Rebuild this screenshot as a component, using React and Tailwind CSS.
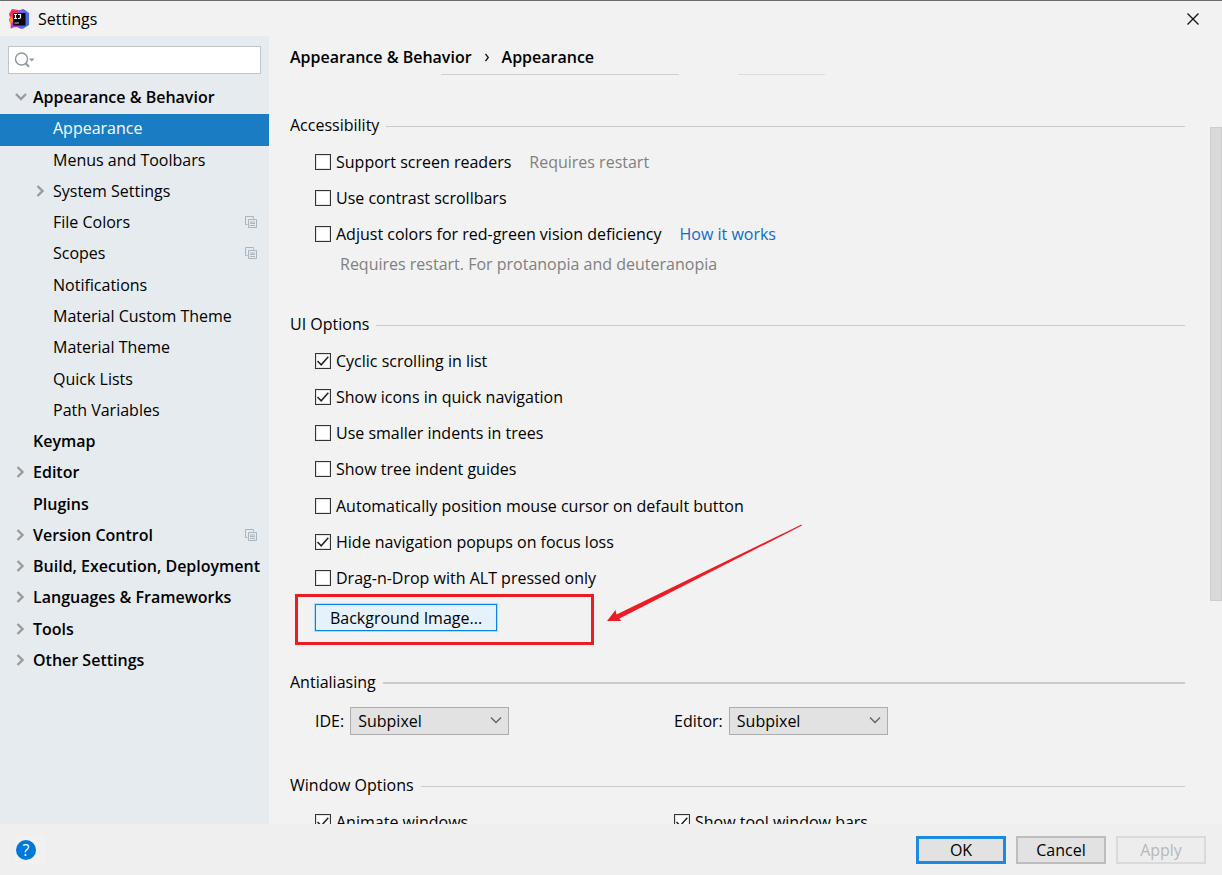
const TREE = [
  { label: "Appearance & Behavior", level: 0, arrow: "down" },
  { label: "Appearance", level: 1, selected: true },
  { label: "Menus and Toolbars", level: 1 },
  { label: "System Settings", level: 1, arrow: "right" },
  { label: "File Colors", level: 1, project: true },
  { label: "Scopes", level: 1, project: true },
  { label: "Notifications", level: 1 },
  { label: "Material Custom Theme", level: 1 },
  { label: "Material Theme", level: 1 },
  { label: "Quick Lists", level: 1 },
  { label: "Path Variables", level: 1 },
  { label: "Keymap", level: 0 },
  { label: "Editor", level: 0, arrow: "right" },
  { label: "Plugins", level: 0 },
  { label: "Version Control", level: 0, arrow: "right", project: true },
  { label: "Build, Execution, Deployment", level: 0, arrow: "right" },
  { label: "Languages & Frameworks", level: 0, arrow: "right" },
  { label: "Tools", level: 0, arrow: "right" },
  { label: "Other Settings", level: 0, arrow: "right" },
];

const UI_OPTIONS = [
  ["cyclic", "Cyclic scrolling in list", true],
  ["quicknav", "Show icons in quick navigation", true],
  ["indents", "Use smaller indents in trees", false],
  ["guides", "Show tree indent guides", false],
  ["cursor", "Automatically position mouse cursor on default button", false],
  ["popups", "Hide navigation popups on focus loss", true],
  ["dnd", "Drag-n-Drop with ALT pressed only", false],
];

function AppLogo() {
  return (
    <svg width="20" height="20" viewBox="0 0 20 20" aria-hidden="true">
      <path d="M3 0 9 1l4 3-4 8-7 8-.5-6L0 11l1-2.500L0 5z" fill="#f0305c" />
      <path d="M0 10 2 7l3 5-2 2.500-2.500-1z" fill="#f98b2c" />
      <path d="M1.500 19 3 13l6 0 6 4-3 3-4-2z" fill="#b03ad0" />
      <path d="M10 4 14.500 0 20 4v12l-6.500 4-3.500-3z" fill="#4a6ae8" />
      <path d="M9 1.500 14.500 0 16 4H8z" fill="#7a5fd6" />
      <rect x="4" y="4" width="12.500" height="12.500" fill="#0a0606" />
      <path d="M5 5.500h3M6.500 5.500v4M5 9.500h3M9 5.500h2.500v2.800q0 1.200-1.200 1.200H9" fill="none" stroke="#fff" strokeWidth="1.200" />
      <path d="M5.500 14h4.500" stroke="#c8c8c8" strokeWidth="1" />
    </svg>
  );
}

function Arrow({ dir }) {
  return (
    <svg width="12" height="12" viewBox="0 0 12 12" fill="none" stroke="#999b9d" strokeWidth="2.400" aria-hidden="true">
      {dir === "down" ? <path d="M1 3 6 8 11 3" /> : <path d="M2.500 1 7.500 6 2.500 11" />}
    </svg>
  );
}

function ProjectIcon() {
  return (
    <svg className="ml-auto shrink-0" width="12" height="12" viewBox="0 0 12 12" fill="none" stroke="#a9b4bc" aria-hidden="true">
      <path d="M2.500 8.500h-2v-8h8v2" />
      <path d="M3.500 11.500v-8h8v8z" />
      <path d="M5 6h5M5 7.500h5M5 9.500h5" />
    </svg>
  );
}

function TreeItem({ item }) {
  const indent = item.level === 0 ? "pl-[15px] font-semibold" : "pl-[35px]";
  const colors = item.selected ? "bg-[#1a7dc4] text-white" : "text-black";
  return (
    <li className="flex flex-1">
      <a href="#" className={`flex w-full items-center pr-3 pb-[3px] ${indent} ${colors}`}>
        <span className="flex w-[18px] shrink-0">{item.arrow && <Arrow dir={item.arrow} />}</span>
        <span className="whitespace-nowrap">{item.label}</span>
        {item.project && <ProjectIcon />}
      </a>
    </li>
  );
}

function Check({ id, label, checked }) {
  return (
    <div className="flex items-center gap-[5px]">
      <span className="relative flex size-4 shrink-0">
        <input
          id={id}
          type="checkbox"
          defaultChecked={checked}
          className="peer size-4 appearance-none border border-[#333333] bg-white shadow-[inset_0_0_0_1px_#e4e4e4]"
        />
        <svg className="pointer-events-none absolute inset-0 hidden peer-checked:block" width="16" height="16" viewBox="0 0 16 16" fill="none" stroke="#222" strokeWidth="1.500" aria-hidden="true">
          <path d="M2.500 8 6.200 11.800 13.300 3.800" />
        </svg>
      </span>
      <label htmlFor={id} className="whitespace-nowrap">{label}</label>
    </div>
  );
}

function Heading({ children, thick }) {
  return (
    <div className="flex h-6 items-center gap-[7px]">
      <h2>{children}</h2>
      <span className={`mt-[2px] flex-1 bg-[#cbcbcb] ${thick ? "h-[2px]" : "h-px"}`} />
    </div>
  );
}

function Combo({ id, label }) {
  return (
    <div className="flex items-center gap-[6px]">
      <label htmlFor={id}>{label}</label>
      <span className="relative flex">
        <select id={id} className="h-7 w-[159px] appearance-none border border-[#adadad] bg-[#e2e2e2] pl-[7px] text-black">
          <option>Subpixel</option>
        </select>
        <svg className="pointer-events-none absolute top-2 right-[7px]" width="12" height="10" viewBox="0 0 12 10" fill="none" stroke="#606060" strokeWidth="1.300" aria-hidden="true">
          <path d="M1 2.500 6 7.500 11 2.500" />
        </svg>
      </span>
    </div>
  );
}

export default function App() {
  return (
    <div className="flex h-screen flex-col overflow-hidden border-t border-[#6d6a6d] bg-[#f2f2f2] font-['Open_Sans','Noto_Sans',sans-serif] text-[16px] leading-5 text-black">
      <header className="flex h-[35px] shrink-0 items-center gap-[9px] pr-[22px] pl-[9px]">
        <AppLogo />
        <h1>Settings</h1>
        <button type="button" aria-label="Close" className="ml-auto">
          <svg width="14" height="14" viewBox="0 0 14 14" fill="none" stroke="#111" strokeWidth="1.300">
            <path d="M1.500 1.500 12.500 12.500M12.500 1.500 1.500 12.500" />
          </svg>
        </button>
      </header>

      <div className="flex min-h-0 flex-1">
        <aside className="w-[269px] shrink-0 bg-[#e6ebef] pt-[10px]">
          <div className="mx-2 flex h-7 items-center border border-[#c0c4c6] bg-white pl-[5px]">
            <svg className="shrink-0" width="22" height="18" viewBox="0 0 22 18" fill="none" aria-hidden="true">
              <circle cx="7.500" cy="8" r="6" stroke="#8d979d" strokeWidth="1.400" />
              <path d="M11.500 12.300 15 15.800" stroke="#8d979d" strokeWidth="2" />
              <path d="M15 7.500h5.500l-2.700 3z" fill="#8d979d" />
            </svg>
            <input aria-label="Search settings" className="min-w-0 flex-1 bg-transparent outline-none" />
          </div>
          <ul className="mt-[9px] flex h-[594px] flex-col">
            {TREE.map((item) => (
              <TreeItem key={item.label} item={item} />
            ))}
          </ul>
        </aside>

        <main className="flex min-w-0 flex-1 flex-col pl-[21px]">
          <nav aria-label="Breadcrumb" className="flex h-9 shrink-0 items-center pt-[6px] font-semibold">
            <span>Appearance &amp; Behavior</span>
            <svg className="mx-3" width="6" height="9" viewBox="0 0 6 9" fill="none" stroke="#111" strokeWidth="1.300" aria-hidden="true">
              <path d="M1.500 1 4.300 4.500 1.500 8" />
            </svg>
            <span>Appearance</span>
          </nav>

          <div className="flex min-h-0 flex-1 overflow-hidden">
            <div className="min-w-0 flex-1">
              <div className="flex gap-[59px] pl-[151px]">
                <span className="h-[3px] w-[238px] border-b border-[#cfcfcf]" />
                <span className="h-[3px] w-[87px] border-b border-[#dcdcdc]" />
              </div>

              <section className="pt-[38px]">
                <Heading>Accessibility</Heading>
                <div className="mt-[7px] pl-[25px]">
                  <div className="flex h-9 items-center gap-[18px]">
                    <Check id="readers" label="Support screen readers" />
                    <span className="text-[#808080]">Requires restart</span>
                  </div>
                  <div className="flex h-9 items-center">
                    <Check id="contrast" label="Use contrast scrollbars" />
                  </div>
                  <div className="flex h-9 items-center gap-[18px]">
                    <Check id="vision" label="Adjust colors for red-green vision deficiency" />
                    <a href="#" className="text-[#0c6dc4]">How it works</a>
                  </div>
                  <p className="flex h-6 items-center pl-[25px] text-[#808080]">
                    Requires restart. For protanopia and deuteranopia
                  </p>
                </div>
              </section>

              <section className="pt-9">
                <Heading>UI Options</Heading>
                <div className="mt-[7px] pl-[25px]">
                  <ul className="flex h-[253px] flex-col">
                    {UI_OPTIONS.map(([id, label, checked]) => (
                      <li key={id} className="flex flex-1 items-center">
                        <Check id={id} label={label} checked={checked} />
                      </li>
                    ))}
                  </ul>
                  <div className="relative h-9 pt-2">
                    <button type="button" className="flex h-[27px] w-[182px] items-center justify-center border border-[#0a84e0] bg-[#e5f1fb] shadow-[0_0_0_1px_#b5d9f5]">
                      Background Image...
                    </button>
                    <span className="pointer-events-none absolute -top-[2px] -left-5 h-[51px] w-[299px] border-3 border-[#ed1c24]" />
                    <svg className="pointer-events-none absolute -top-[73px] left-[291px]" width="198" height="102" viewBox="0 0 198 102" fill="#ed1c24" aria-hidden="true">
                      <path d="M195.500 1.500 10.500 91.500 9.500 87 1 98 15 98 13.500 95.500 196 2.500z" />
                    </svg>
                  </div>
                </div>
              </section>

              <section className="pt-[38px]">
                <Heading thick>Antialiasing</Heading>
                <div className="mt-[13px] grid grid-cols-[359px_1fr] pl-[25px]">
                  <Combo id="ide" label="IDE:" />
                  <Combo id="editor" label="Editor:" />
                </div>
              </section>

              <section className="pt-[38px]">
                <Heading>Window Options</Heading>
                <div className="mt-[7px] grid h-9 grid-cols-[359px_1fr] items-center pl-[25px]">
                  <Check id="animate" label="Animate windows" checked />
                  <Check id="bars" label="Show tool window bars" checked />
                </div>
              </section>
            </div>
            <div className="ml-[25px] w-3 shrink-0 pt-[55px]">
              <div className="h-[474px] border border-[#cdcdcd] bg-[#d9d9d9]" />
            </div>
          </div>
        </main>
      </div>

      <footer className="flex h-[51px] shrink-0 items-center gap-[10px] bg-[#efefef] pr-4 pl-[15px]">
        <button type="button" aria-label="Help" className="mr-auto flex size-[30px] items-center bg-[#f1f1f1] pl-px">
          <span className="flex size-5 items-center justify-center rounded-full bg-[#0078d7] text-white">?</span>
        </button>
        <button type="button" className="h-7 w-[90px] border-3 border-[#1b8ae0] bg-[#e2e2e2]">OK</button>
        <button type="button" className="h-7 w-[90px] border-2 border-[#bdbdbd] bg-[#e2e2e2]">Cancel</button>
        <button type="button" disabled className="h-7 w-[90px] border-2 border-[#dadada] bg-[#ededed] text-[#b8b8b8]">Apply</button>
      </footer>
    </div>
  );
}
